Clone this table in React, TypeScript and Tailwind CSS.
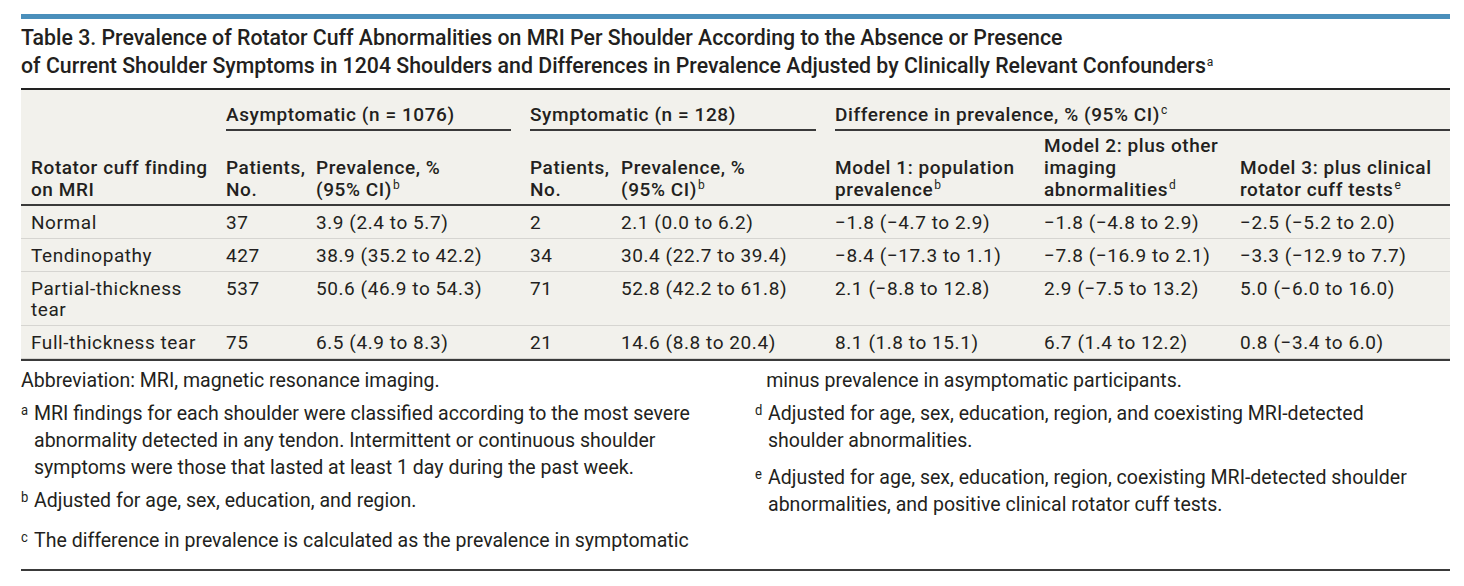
import React from "react";

type Row = {
	finding: React.ReactNode;
	aNo: string;
	aPrev: string;
	sNo: string;
	sPrev: string;
	m1: string;
	m2: string;
	m3: string;
};

const rows: Row[] = [
	{ finding: "Normal", aNo: "37", aPrev: "3.9 (2.4 to 5.7)", sNo: "2", sPrev: "2.1 (0.0 to 6.2)", m1: "−1.8 (−4.7 to 2.9)", m2: "−1.8 (−4.8 to 2.9)", m3: "−2.5 (−5.2 to 2.0)" },
	{ finding: "Tendinopathy", aNo: "427", aPrev: "38.9 (35.2 to 42.2)", sNo: "34", sPrev: "30.4 (22.7 to 39.4)", m1: "−8.4 (−17.3 to 1.1)", m2: "−7.8 (−16.9 to 2.1)", m3: "−3.3 (−12.9 to 7.7)" },
	{ finding: <>Partial-thickness<br />tear</>, aNo: "537", aPrev: "50.6 (46.9 to 54.3)", sNo: "71", sPrev: "52.8 (42.2 to 61.8)", m1: "2.1 (−8.8 to 12.8)", m2: "2.9 (−7.5 to 13.2)", m3: "5.0 (−6.0 to 16.0)" },
	{ finding: "Full-thickness tear", aNo: "75", aPrev: "6.5 (4.9 to 8.3)", sNo: "21", sPrev: "14.6 (8.8 to 20.4)", m1: "8.1 (1.8 to 15.1)", m2: "6.7 (1.4 to 12.2)", m3: "0.8 (−3.4 to 6.0)" },
];

const Sup = ({ children }: { children: React.ReactNode }) => (
	<sup className="text-[12px] -top-[7px] ml-[1px] font-normal">{children}</sup>
);

// footnote paragraph with a hanging superscript mark
const Note = ({ mark, gap = "mb-[6px]", children }: { mark?: string; gap?: string; children: React.ReactNode }) => (
	<div className={`flex ${gap}`}>
		{mark !== undefined && (
			<span className="w-[14px] shrink-0 text-[14px] leading-[20px]">{mark}</span>
		)}
		<p>{children}</p>
	</div>
);

export default function App() {
	const body = "pl-[10px] pt-[6px] pb-[5px] align-top border-b border-[#d6d5d1]";
	const head = "pl-[10px] pt-[4px] pb-[3px] align-bottom text-left font-medium";

	return (
		<div
			className="w-[1464px] h-[586px] bg-white pl-[21px] pr-[14px] pt-[14px] text-[#231f20]"
			style={{ fontFamily: "Roboto, 'Liberation Sans', sans-serif" }}>
			{/* accent bar */}
			<div className="h-[5px] bg-[#4a8fbb]" />

			{/* Title */}
			<h1 className="mt-[5px] pb-[8px] border-b-2 border-[#222] text-[21.3px] leading-[28px] font-medium">
				Table 3. Prevalence of Rotator Cuff Abnormalities on MRI Per Shoulder According to the Absence or Presence
				<br />
				of Current Shoulder Symptoms in 1204 Shoulders and Differences in Prevalence Adjusted by Clinically Relevant Confounders
				<Sup>a</Sup>
			</h1>

			{/* Table */}
			<table className="w-full table-fixed border-collapse bg-[#f2f1ec] text-[19px] tracking-[0.03em] leading-[22px]">
				<colgroup>
					<col className="w-[195px]" />
					<col className="w-[90px]" />
					<col className="w-[214px]" />
					<col className="w-[91px]" />
					<col className="w-[214px]" />
					<col className="w-[209px]" />
					<col className="w-[196px]" />
					<col className="w-[220px]" />
				</colgroup>
				<thead>
					<tr>
						<th />
						<th colSpan={2} className="pl-[10px] pr-[9px] pt-[14px] text-left font-medium">
							<div className="border-b-2 border-[#3a3a3a] pb-[3px]">Asymptomatic (n = 1076)</div>
						</th>
						<th colSpan={2} className="pl-[10px] pr-[9px] pt-[14px] text-left font-medium">
							<div className="border-b-2 border-[#3a3a3a] pb-[3px]">Symptomatic (n = 128)</div>
						</th>
						<th colSpan={3} className="pl-[10px] pt-[14px] text-left font-medium">
							<div className="border-b-2 border-[#3a3a3a] pb-[3px]">
								Difference in prevalence, % (95% CI)<Sup>c</Sup>
							</div>
						</th>
					</tr>
					<tr className="border-b-2 border-[#3a3a3a]">
						<th className={head}>Rotator cuff finding<br />on MRI</th>
						<th className={head}>Patients,<br />No.</th>
						<th className={head}>Prevalence, %<br />(95% CI)<Sup>b</Sup></th>
						<th className={head}>Patients,<br />No.</th>
						<th className={head}>Prevalence, %<br />(95% CI)<Sup>b</Sup></th>
						<th className={head}>Model 1: population<br />prevalence<Sup>b</Sup></th>
						<th className={head}>Model 2: plus other<br />imaging<br />abnormalities<Sup>d</Sup></th>
						<th className={head}>Model 3: plus clinical<br />rotator cuff tests<Sup>e</Sup></th>
					</tr>
				</thead>
				<tbody className="leading-[21px]">
					{rows.map((r, i) => (
						<tr key={i}>
							<td className={body}>{r.finding}</td>
							<td className={body}>{r.aNo}</td>
							<td className={body}>{r.aPrev}</td>
							<td className={body}>{r.sNo}</td>
							<td className={body}>{r.sPrev}</td>
							<td className={body}>{r.m1}</td>
							<td className={body}>{r.m2}</td>
							<td className={body}>{r.m3}</td>
						</tr>
					))}
				</tbody>
			</table>

			{/* Footnotes (tall, slightly narrowed face) */}
			<div className="grid grid-cols-2 gap-x-[39px] border-t-2 border-[#3a3a3a] pt-[6px] h-[212px] border-b-2 text-[21px] leading-[27px]">
				<div className="origin-top-left scale-x-[0.93] whitespace-nowrap">
					<Note>Abbreviation: MRI, magnetic resonance imaging.</Note>
					<Note mark="a">
						MRI findings for each shoulder were classified according to the most severe
						<br />
						abnormality detected in any tendon. Intermittent or continuous shoulder
						<br />
						symptoms were those that lasted at least 1 day during the past week.
					</Note>
					<Note mark="b" gap="mb-[13px]">Adjusted for age, sex, education, and region.</Note>
					<Note mark="c">The difference in prevalence is calculated as the prevalence in symptomatic</Note>
				</div>
				<div className="origin-top-left scale-x-[0.93] whitespace-nowrap">
					<div className="pl-[12px] mb-[6px]">minus prevalence in asymptomatic participants.</div>
					<Note mark="d" gap="mb-[10px]">
						Adjusted for age, sex, education, region, and coexisting MRI-detected
						<br />
						shoulder abnormalities.
					</Note>
					<Note mark="e">
						Adjusted for age, sex, education, region, coexisting MRI-detected shoulder
						<br />
						abnormalities, and positive clinical rotator cuff tests.
					</Note>
				</div>
			</div>
		</div>
	);
}
